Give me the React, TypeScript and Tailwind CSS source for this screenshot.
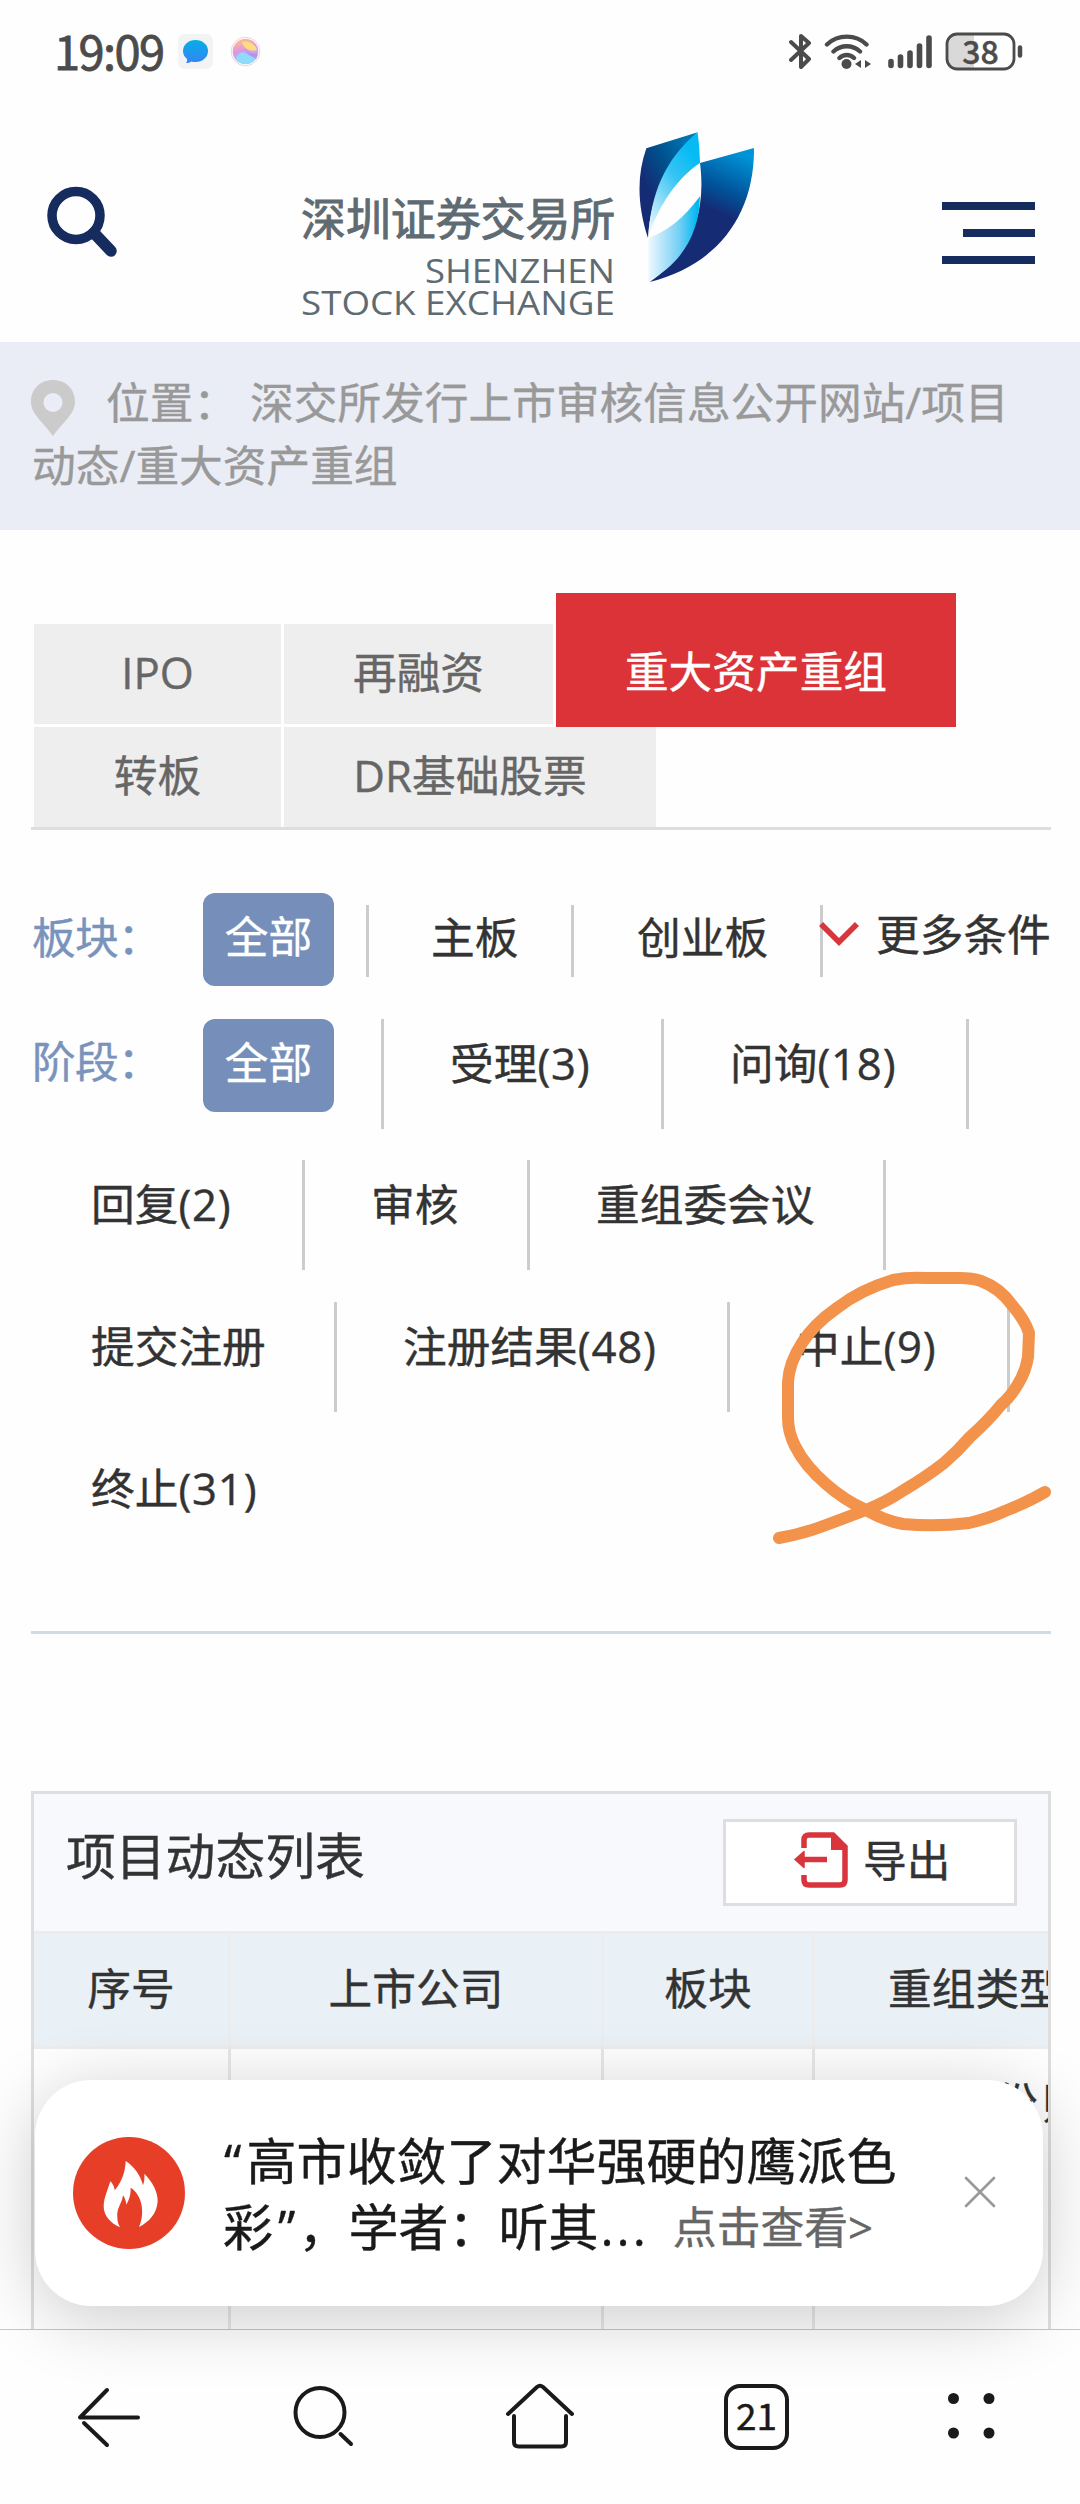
import React from "react";

function StatusBar() {
  return (
    <div className="flex h-[110px] items-start pl-[54px] pr-[55px]">
      <div className="mt-[14px] h-[72px] w-[124px] whitespace-nowrap font-['Noto_Sans_CJK_SC',sans-serif] text-[47px] leading-[72px] tracking-[-1.600px] text-[#4b4b4b] [-webkit-text-stroke:0.800px]">
        19:09
      </div>
      <svg className="mt-[34px] h-[35px] w-[35px]" viewBox="0 0 35 35">
        <defs>
          <linearGradient id="chat" x1="0" y1="0" x2="0" y2="1">
            <stop offset="0" stopColor="#06aee6" />
            <stop offset="1" stopColor="#3583f5" />
          </linearGradient>
        </defs>
        <rect width="35" height="35" rx="7" fill="#f1f3f4" />
        <path d="M17.500 6C24.500 6 30 10.700 30 17S24.500 28 17.500 28c-1.500 0-3-.2-4.300-.6C12 28.600 10 29 8 29c1-1 1.400-2.500 1-4C6.500 23 5 20.200 5 17 5 10.700 10.500 6 17.500 6z" fill="url(#chat)" />
      </svg>
      <svg className="ml-[17px] mt-[36px] h-[31px] w-[31px]" viewBox="0 0 31 31">
        <defs>
          <linearGradient id="orb" x1="0.3" y1="0" x2="0.6" y2="1">
            <stop offset="0" stopColor="#ffc08a" />
            <stop offset="0.45" stopColor="#dc96e6" />
            <stop offset="1" stopColor="#86d8fa" />
          </linearGradient>
        </defs>
        <circle cx="15.500" cy="15.500" r="14.300" fill="#fff" stroke="#ecd2d8" strokeWidth="1" />
        <circle cx="15.500" cy="15.500" r="12.800" fill="url(#orb)" />
        <path d="M12 6c5-2 13 1 15 8-5 2-13 0-15-8z" fill="#fddc84" />
        <path d="M14 13c4 4 8 5 13 4 1 2 0 4-1 6-4-2-8-4-12-10z" fill="#b98af0" opacity=".8" />
        <path d="M6 22c2-5 7-7 11-4s6 3 8 4c-2 4-5 6-9.500 6S8 26 6 22z" fill="#8edcfb" />
      </svg>
      <div className="grow" />
      <svg className="mt-[33px] h-[37px] w-[23px]" viewBox="0 0 23 37" fill="none" stroke="#4b4b4b" strokeWidth="4" strokeLinecap="round" strokeLinejoin="round">
        <path d="M2 9l18 17-8 8V3l8 7L2 27" />
      </svg>
      <svg className="ml-[12px] mt-[33px] h-[37px] w-[47px]" viewBox="0 0 47 37" fill="none" stroke="#4b4b4b" strokeWidth="4.400" strokeLinecap="round">
        <path d="M3 11.500C13.500 1 32 1 42.500 11.500M9.500 18.500c7.500-7 19-7 26.500 0M15.500 25c4.200-4 10.300-4 14.500 0" />
        <circle cx="22.500" cy="31" r="5" fill="#4b4b4b" stroke="none" />
        <path d="M37 27v8l-6-4zM41 27v8l6-4z" fill="#4b4b4b" stroke="none" />
      </svg>
      <svg className="ml-[16px] mt-[33px] h-[37px] w-[46px]" viewBox="0 0 46 37" stroke="#4b4b4b" strokeWidth="5.600" strokeLinecap="round">
        <path d="M4 28.500v4M13.500 24v8.500M23 20v12.500M32.500 13v19.500M42 5v27.500" />
      </svg>
      <div className="relative ml-[12px] mt-[32px] h-[39px] w-[80px]">
        <svg className="h-[39px] w-[80px]" viewBox="0 0 80 39">
          <path d="M12 2h17v35H12C6 37 2 33 2 27V12C2 6 6 2 12 2z" fill="#d9d9d9" />
          <rect x="2" y="2" width="67" height="35" rx="10" fill="none" stroke="#4b4b4b" strokeWidth="2.800" />
          <path d="M75 15.500v8" stroke="#4b4b4b" strokeWidth="4.500" strokeLinecap="round" />
        </svg>
        <div className="absolute left-0 top-0 w-[71px] text-center font-['Noto_Sans_CJK_SC',sans-serif] text-[32px] font-medium leading-[37px] text-[#4b4b4b]">38</div>
      </div>
    </div>
  );
}

function SiteHeader() {
  return (
    <div className="flex h-[232px] items-start">
      <svg className="ml-[47px] mt-[76px] h-[71px] w-[70px]" viewBox="0 0 70 71" fill="none" stroke="#162c5e">
        <circle cx="29" cy="29.500" r="24" strokeWidth="9.500" />
        <path d="M47 47l17 18" strokeWidth="11.500" strokeLinecap="round" />
      </svg>
      <div className="ml-[184px] mt-[75px] flex w-[316px] flex-col items-start text-[#5f6b72]">
        <div className="h-[67px] whitespace-nowrap font-['Noto_Sans_CJK_SC',sans-serif] text-[44.900px] leading-[64px] [-webkit-text-stroke:1px_#5f6b72]">深圳证券交易所</div>
        <svg className="h-[70px] w-[316px] overflow-visible" viewBox="0 0 316 70" fill="#5f6b72" fontFamily="Open Sans" fontSize="33" fontWeight="500">
          <text x="124" y="31" textLength="190" lengthAdjust="spacingAndGlyphs">SHENZHEN</text>
          <text x="0" y="63" textLength="314" lengthAdjust="spacingAndGlyphs">STOCK EXCHANGE</text>
        </svg>
      </div>
      <svg className="ml-[20px] mt-[19px] h-[158px] w-[120px]" viewBox="110 57 360 474">
        <defs>
          <linearGradient id="lg1" x1="0.8" y1="0" x2="0.2" y2="0.6">
            <stop offset="0" stopColor="#0077b8" />
            <stop offset="0.55" stopColor="#00508c" />
            <stop offset="1" stopColor="#152b74" />
          </linearGradient>
          <linearGradient id="lg2" x1="0.7" y1="0.1" x2="0.1" y2="1">
            <stop offset="0" stopColor="#06bbf3" />
            <stop offset="0.35" stopColor="#35c4f3" />
            <stop offset="1" stopColor="#edf7fd" />
          </linearGradient>
          <linearGradient id="lg3" x1="0.75" y1="0" x2="0.4" y2="1">
            <stop offset="0" stopColor="#0093d8" />
            <stop offset="0.28" stopColor="#00549a" />
            <stop offset="0.46" stopColor="#152b74" />
            <stop offset="1" stopColor="#152b74" />
          </linearGradient>
          <linearGradient id="lg4" x1="0" y1="0" x2="1" y2="0">
            <stop offset="0" stopColor="#eef8fe" />
            <stop offset="0.6" stopColor="#74cff5" />
            <stop offset="0.95" stopColor="#00b8f0" />
          </linearGradient>
        </defs>
        <path d="M138 115L292 67C205 145 150 260 143 384C112 290 108 200 138 115z" fill="url(#lg1)" />
        <path d="M292 67Q298 110 299 159C235 200 175 285 145 378C150 255 195 145 292 67z" fill="url(#lg2)" />
        <path d="M299 159L461 114C463 320 345 468 148 516C280 425 317 300 299 159z" fill="url(#lg3)" />
        <path d="M299 259C250 325 200 365 144 384V514C245 460 297 370 299 259z" fill="url(#lg4)" />
      </svg>
      <svg className="ml-[184px] mt-[91px] h-[64px] w-[94px]" viewBox="0 0 94 64" fill="#162c5e">
        <rect x="1" y="1" width="93" height="8" />
        <rect x="22" y="28" width="72" height="8" />
        <rect x="1" y="55" width="93" height="8" />
      </svg>
    </div>
  );
}

function Breadcrumb() {
  return (
    <div className="h-[188px] bg-[#eaedf5] pl-[31px] pt-[29px] text-[#999]">
      <div className="flex h-[63px] items-start whitespace-nowrap leading-[63px]">
        <svg className="mt-[9px] h-[56px] w-[44px]" viewBox="0 0 44 56">
          <path fillRule="evenodd" d="M22 0C9 0 0 9 0 22c0 12 12 20 22 34 10-14 22-22 22-34C44 9 35 0 22 0zm0 13a9.500 9.500 0 1 1 0 19 9.500 9.500 0 0 1 0-19z" fill="#cbcbcb" />
        </svg>
        <span className="ml-[31px] w-[132px]">位置：</span>
        <span className="ml-[12px]">深交所发行上市审核信息公开网站/项目</span>
      </div>
      <div className="h-[63px] pl-[1px] leading-[63px]">动态/重大资产重组</div>
    </div>
  );
}

function Tabs() {
  return (
    <div className="ml-[31px] mr-[29px] mt-[63px] border-b-[3px] border-[#dedede] pl-[3px] text-[#666]">
      <div className="flex h-[134px] items-end gap-[3px]">
        <div className="mb-[3px] flex h-[100px] w-[247px] items-center justify-center bg-[#eee] pb-[3px]">IPO</div>
        <div className="mb-[3px] flex h-[100px] w-[269px] items-center justify-center bg-[#eee] pb-[3px]">再融资</div>
        <div className="flex h-[134px] w-[400px] items-center justify-center bg-[#dc3338] pt-[24px] text-white">重大资产重组</div>
      </div>
      <div className="flex h-[100px] gap-[3px]">
        <div className="flex w-[247px] items-center justify-center bg-[#eee] pb-[3px]">转板</div>
        <div className="flex w-[372px] items-center justify-center bg-[#eee] pb-[3px]">DR基础股票</div>
      </div>
    </div>
  );
}

function Pill() {
  return <div className="flex h-[93px] w-[131px] shrink-0 items-center justify-center rounded-[12px] bg-[#758fba] pb-[6px] text-white">全部</div>;
}

function Stage({ label, count, w, pl }: { label: string; count?: string; w: string; pl: string }) {
  return (
    <div className={`h-[110px] shrink-0 whitespace-nowrap border-r-[3px] border-[#ccc] leading-[89px] ${w} ${pl}`}>
      {label}
      {count && <span className="tracking-[0.800px]">({count})</span>}
    </div>
  );
}

function Filters() {
  return (
    <div className="ml-[31px] mr-[29px] h-[804px] border-b-[3px] border-[#cfdbe6] pt-[63px] text-[#333]">
      <div className="flex h-[126px] items-start">
        <div className="w-[172px] shrink-0 pl-[1px] leading-[88px] tracking-[-0.800px] text-[#7a93bd]">板块：</div>
        <Pill />
        <div className="mt-[12px] h-[72px] w-[35px] shrink-0 border-r-[3px] border-[#ccc]" />
        <div className="mt-[12px] h-[72px] w-[205px] shrink-0 border-r-[3px] border-[#ccc] pl-[62px] leading-[64px]">主板</div>
        <div className="mt-[12px] h-[72px] w-[249px] shrink-0 border-r-[3px] border-[#ccc] pl-[63px] leading-[64px]">创业板</div>
        <svg className="ml-[-4px] mt-[28px] h-[27px] w-[40px] shrink-0" viewBox="0 0 40 27" fill="none" stroke="#d8363c" strokeWidth="5.800">
          <path d="M2 3l18 18L38 3" />
        </svg>
        <div className="ml-[17px] whitespace-nowrap leading-[82px]">更多条件</div>
      </div>
      <div className="flex h-[141px] items-start">
        <div className="w-[172px] shrink-0 pl-[1px] leading-[84px] tracking-[-0.800px] text-[#7a93bd]">阶段：</div>
        <Pill />
        <Stage label="" w="w-[50px]" pl="pl-0" />
        <Stage label="受理" count="3" w="w-[280px]" pl="pl-[66px]" />
        <Stage label="问询" count="18" w="w-[305px]" pl="pl-[66px]" />
      </div>
      <div className="flex h-[142px]">
        <Stage label="回复" count="2" w="w-[274px]" pl="pl-[60px]" />
        <Stage label="审核" w="w-[225px]" pl="pl-[66px]" />
        <Stage label="重组委会议" w="w-[356px]" pl="pl-[66px]" />
      </div>
      <div className="flex h-[142px]">
        <Stage label="提交注册" w="w-[306px]" pl="pl-[60px]" />
        <Stage label="注册结果" count="48" w="w-[393px]" pl="pl-[66px]" />
        <Stage label="中止" count="9" w="w-[280px]" pl="pl-[66px]" />
      </div>
      <div className="pl-[60px] leading-[89px]">
        终止<span className="tracking-[0.800px]">(31)</span>
      </div>
    </div>
  );
}

function ProjectTable() {
  return (
    <div className="ml-[31px] mr-[29px] mt-[157px] h-[538px] overflow-hidden border-x-[3px] border-t-[3px] border-[#dedede] text-[#333]">
      <div className="flex h-[137px] items-start bg-[#f8f9fd] pl-[32px] pr-[31px]">
        <div className="grow text-[49.800px] leading-[124px]">项目动态列表</div>
        <div className="mt-[25px] flex h-[87px] w-[294px] items-start border-[3px] border-[#dedede] bg-white pl-[68px]">
          <svg className="mt-[10px] h-[56px] w-[54px] shrink-0" viewBox="0 0 54 56" fill="none" stroke="#d8363c" strokeWidth="5">
            <path d="M10 16V8q0-5 5-5h24l12 12v33q0 5-5 5H15q-5 0-5-5v-5" strokeWidth="5.500" />
            <path d="M38 3v14h13z" fill="#d8363c" strokeWidth="2" />
            <path d="M6 27.500h27" strokeWidth="5.500" />
            <path d="M1 27.500l9-8v16z" fill="#d8363c" strokeWidth="1.500" strokeLinejoin="round" />
          </svg>
          <span className="ml-[15px] whitespace-nowrap leading-[77px]">导出</span>
        </div>
      </div>
      <div className="flex h-[118px] w-[1100px] border-y-[3px] border-[#ececec] bg-[#e9f0f6] leading-[108px]">
        <div className="w-[197px] border-r-[3px] border-[#ebedef] text-center">序号</div>
        <div className="w-[373px] border-r-[3px] border-[#ebedef] text-center">上市公司</div>
        <div className="w-[211px] border-r-[3px] border-[#ebedef] text-center">板块</div>
        <div className="pl-[73px]">重组类型</div>
      </div>
      <div className="flex h-[283px] w-[1100px]">
        <div className="w-[197px] border-r-[3px] border-[#e8e8e8]" />
        <div className="w-[373px] border-r-[3px] border-[#e8e8e8]" />
        <div className="w-[211px] border-r-[3px] border-[#e8e8e8]" />
        <div className="whitespace-nowrap pl-[179px] pt-[22px] leading-[63px] tracking-[5px]">份购</div>
      </div>
    </div>
  );
}

function BottomNav() {
  return (
    <div className="flex h-[175px] items-start border-t border-[#c6c6c6] bg-[#fefefe] pl-[76px] pt-[53px]">
      <svg className="h-[68px] w-[66px]" viewBox="0 0 66 68" fill="none" stroke="#1a1a1a" strokeWidth="4" strokeLinecap="round">
        <path d="M62 34.500H4L31 7M8 40l23 22" strokeLinejoin="round" />
      </svg>
      <svg className="ml-[149px] h-[68px] w-[64px]" viewBox="0 0 64 68" fill="none" stroke="#1a1a1a" strokeWidth="4" strokeLinecap="round">
        <circle cx="29" cy="29.500" r="24.500" />
        <path d="M49.500 51L60 61" />
      </svg>
      <svg className="ml-[150px] h-[68px] w-[70px]" viewBox="0 0 70 68" fill="none" stroke="#1a1a1a" strokeWidth="4" strokeLinecap="round" strokeLinejoin="round">
        <path d="M3 31L32 4q3-2.500 6 0l29 27" />
        <path d="M9 33v26q0 4.500 4.500 4.500h43q4.500 0 4.500-4.500V33" />
      </svg>
      <div className="ml-[149px] mt-[1px] h-[66px] w-[65px] rounded-[16px] border-4 border-[#1a1a1a] text-center font-['Noto_Sans_CJK_SC',sans-serif] text-[37px] leading-[53px] text-[#1a1a1a]">21</div>
      <svg className="ml-[157px] mt-[1px] h-[68px] w-[56px]" viewBox="0 0 56 68" fill="#1a1a1a">
        <circle cx="7.500" cy="14.500" r="5.500" />
        <circle cx="43" cy="14.500" r="5.500" />
        <circle cx="7.500" cy="49" r="5.500" />
        <circle cx="43" cy="49" r="5.500" />
      </svg>
    </div>
  );
}

function NewsToast() {
  return (
    <div className="absolute left-[35px] top-[2080px] flex h-[226px] w-[1008px] rounded-[56px] bg-white shadow-[0_12px_70px_rgba(0,0,0,0.2)]">
      <svg className="ml-[38px] mt-[57px] h-[112px] w-[112px] shrink-0" viewBox="69 50 336 336">
        <circle cx="237" cy="218" r="168" fill="#e73f27" />
        <path d="M227 122C254 140 272 166 279 195C283 184 284 172 283 160C308 185 323 214 323 242C321 280 297 305 267 320C285 280 278 225 242 202C243 220 238 238 229 253C228 243 225 233 219 225C216 250 199 265 202 290C202 303 205 312 210 321C180 308 161 285 161 258C162 230 174 208 181 183C188 190 193 199 194 210C215 185 226 155 227 122z" fill="#fff" />
      </svg>
      <div className="ml-[38px] mt-[48px] w-[700px] shrink-0 text-[50px] text-[#1a1a1a]">
        <div className="h-[66px] whitespace-nowrap leading-[66px]"><span className="ml-[1px] mr-[5px]">“</span>高市收敛了对华强硬的鹰派色</div>
        <div className="flex h-[66px] whitespace-nowrap leading-[66px]">
          <span>彩<span className="ml-[5px] mr-[3px]">”</span>，学者：听其</span>
          <span className="ml-[2px] tracking-[3px]">...</span>
          <span className="ml-[24px] text-[43.800px] text-[#666]">点击查看&gt;</span>
        </div>
      </div>
      <svg className="ml-[41px] mt-[96px] h-[32px] w-[32px]" viewBox="0 0 32 32" stroke="#999" strokeWidth="2.600" strokeLinecap="round">
        <path d="M2 2l28 28M30 2L2 30" />
      </svg>
    </div>
  );
}

function PenMark() {
  return (
    <svg className="pointer-events-none absolute left-[760px] top-[1260px] h-[300px] w-[300px]" viewBox="760 1260 300 300" fill="none" stroke="#f3924a" strokeWidth="12" strokeLinecap="round" strokeLinejoin="round">
      <path d="M779 1538Q803 1534 826 1525L866 1510Q886 1502 904 1490Q926 1477 944 1463Q958 1451 970 1437Q988 1421 1001 1405Q1012 1395 1018 1384Q1026 1371 1028 1357L1029 1333Q1025 1320 1012 1305Q1000 1288 981 1281Q972 1278 960 1278H925Q908 1277 893 1280Q860 1290 837 1308Q814 1324 802 1343Q789 1363 788 1382V1418Q788 1432 795 1446Q805 1466 826 1484Q844 1500 866 1510Q885 1521 903 1524Q936 1527 969 1523Q990 1518 1005 1511Q1028 1502 1045 1492" />
    </svg>
  );
}

export default function App() {
  return (
    <div className="relative flex h-[2504px] w-[1080px] flex-col overflow-hidden bg-[#fefefe] font-['Open_Sans','Noto_Sans_CJK_SC',sans-serif] text-[43.700px] [-webkit-text-stroke:0.400px]">
      <StatusBar />
      <SiteHeader />
      <Breadcrumb />
      <Tabs />
      <Filters />
      <ProjectTable />
      <BottomNav />
      <NewsToast />
      <PenMark />
    </div>
  );
}
